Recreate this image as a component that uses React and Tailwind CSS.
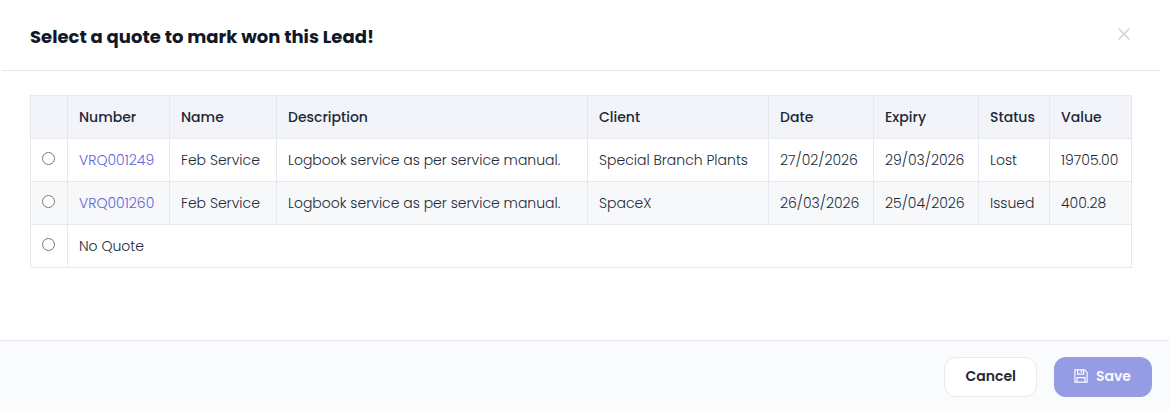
const quotes = [
  { number: 'VRQ001249', name: 'Feb Service', description: 'Logbook service as per service manual.', client: 'Special Branch Plants', date: '27/02/2026', expiry: '29/03/2026', status: 'Lost', value: '19705.00' },
  { number: 'VRQ001260', name: 'Feb Service', description: 'Logbook service as per service manual.', client: 'SpaceX', date: '26/03/2026', expiry: '25/04/2026', status: 'Issued', value: '400.28' },
];

const headings = ['Number', 'Name', 'Description', 'Client', 'Date', 'Expiry', 'Status', 'Value'];

const cell = 'h-[43px] border border-[#e5e8f0] pr-2 pl-[11px] text-left';

function CloseIcon() {
  return (
    <svg width="12" height="12" viewBox="0 0 12 12" fill="none" stroke="currentColor" strokeWidth="1.7" aria-hidden="true">
      <path d="M0.7 0.7 11.3 11.3M11.3 0.7 0.7 11.3" />
    </svg>
  );
}

function SaveIcon() {
  return (
    <svg width="14" height="14" viewBox="0 0 14 14" fill="none" stroke="currentColor" strokeWidth="1.2" aria-hidden="true">
      <path d="M0.9 0.9H10.6L13.1 3.4V13.1H0.9Z" />
      <path d="M3.6 0.9V5.2H9.6V0.9" />
      <path d="M7.5 1.2V3.6" strokeWidth="1.6" />
      <path d="M3 13V8.6H11V13" />
    </svg>
  );
}

function QuoteRadio({ label }) {
  return <input type="radio" name="quote" aria-label={label} className="mb-1 block size-[13px]" />;
}

export default function App() {
  return (
    <div role="dialog" aria-labelledby="dialog-title" className="bg-white font-['Poppins','Inter',sans-serif] text-[14px] leading-[21px] text-[#212837]">
      <header className="mr-[9px] ml-[2px] flex items-center justify-between border-b border-[#e5e6ee] pt-[23px] pr-[30px] pb-5 pl-7">
        <h1 id="dialog-title" className="text-[18px] leading-[27px] font-bold text-[#101828]">Select a quote to mark won this Lead!</h1>
        <button type="button" aria-label="Close" className="mb-[6px] text-[#d5d8e2]"><CloseIcon /></button>
      </header>
      <main className="pt-6 pr-[37px] pb-[72px] pl-[30px]">
        <table className="w-full table-fixed border-collapse">
          <colgroup>
            <col className="w-[37px]" />
            <col className="w-[102px]" />
            <col className="w-[107px]" />
            <col />
            <col className="w-[181px]" />
            <col className="w-[105px]" />
            <col className="w-[105px]" />
            <col className="w-[71px]" />
            <col className="w-[82px]" />
          </colgroup>
          <thead className="bg-[#f3f4f9]">
            <tr>
              <td className={cell} />
              {headings.map((h) => (
                <th key={h} scope="col" className={`${cell} font-medium`}>{h}</th>
              ))}
            </tr>
          </thead>
          <tbody className="font-light">
            {quotes.map((q) => (
              <tr key={q.number} className="even:bg-[#f7f8fa]">
                <td className={cell}><QuoteRadio label={q.number} /></td>
                <td className={cell}><a href="#quote" className="text-[#5d63d8]">{q.number}</a></td>
                <td className={cell}>{q.name}</td>
                <td className={cell}>{q.description}</td>
                <td className={cell}>{q.client}</td>
                <td className={cell}>{q.date}</td>
                <td className={cell}>{q.expiry}</td>
                <td className={cell}>{q.status}</td>
                <td className={cell}>{q.value}</td>
              </tr>
            ))}
            <tr>
              <td className={cell}><QuoteRadio label="No Quote" /></td>
              <td className={cell} colSpan={8}>No Quote</td>
            </tr>
          </tbody>
        </table>
      </main>
      <footer className="flex justify-end gap-[17px] border-t border-[#e5e8f0] bg-[#fafbfd] pt-4 pr-[17px] pb-3 font-semibold">
        <button type="button" className="h-10 rounded-[12px] border border-[#e8e9f1] bg-white px-5 pb-[2px]">Cancel</button>
        <button type="button" className="flex h-10 items-center gap-2 rounded-[12px] bg-[#959ce3] pr-[21px] pb-[2px] pl-5 text-[#f8f9ff]">
          <SaveIcon />
          Save
        </button>
      </footer>
    </div>
  );
}
